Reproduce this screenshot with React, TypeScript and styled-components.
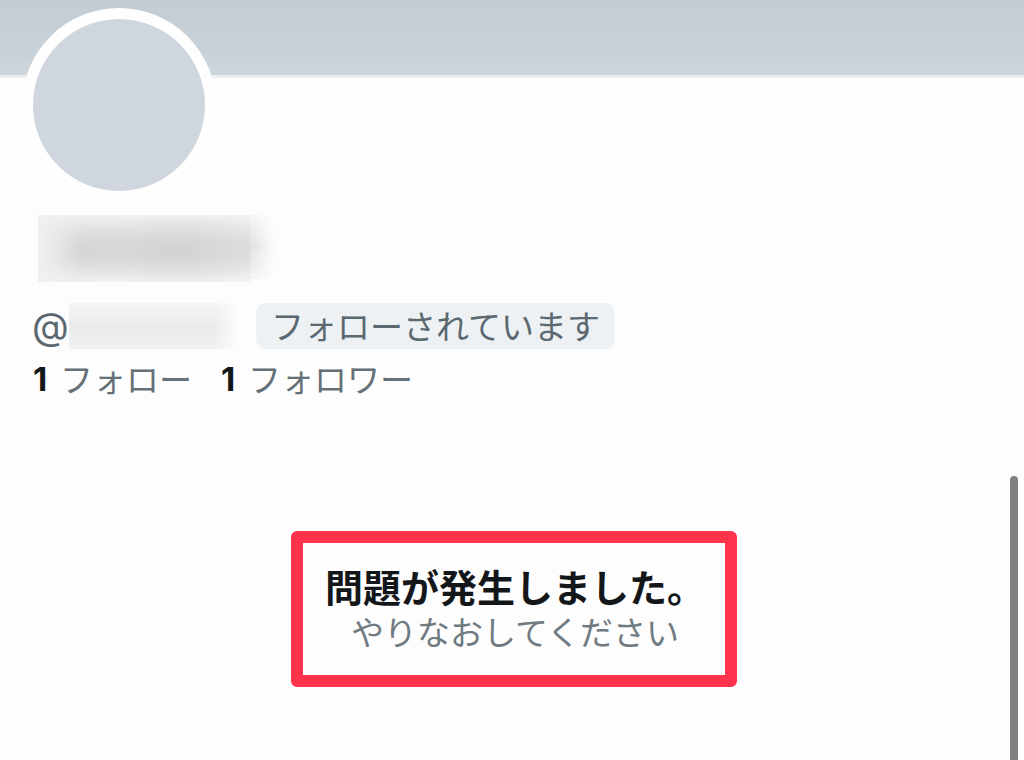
import React from "react";
import styled, { createGlobalStyle } from "styled-components";

const GlobalStyle = createGlobalStyle`
  *, *::before, *::after { box-sizing: border-box; }
  body {
    margin: 0;
    background: #fdfdfd;
    color: #14171a;
    font-family: "Noto Sans CJK JP", "Noto Sans", sans-serif;
    font-size: 33px;
    line-height: 44px;
  }
  p, h1, h2 { margin: 0; }
`;

const Page = styled.div`
  min-height: 100vh;
  overflow: hidden;
`;

const Banner = styled.header`
  height: 78px;
  background: linear-gradient(#c3cbd3, #c8d0d8 60%, #ccd6da) padding-box;
  border-bottom: 3px solid #e8efee;
`;

const Profile = styled.section`
  display: flex;
  flex-direction: column;
  align-items: flex-start;
  padding: 0 32px;
`;

const Avatar = styled.div`
  width: 194px;
  height: 194px;
  margin: -70px 0 0 -10px;
  border: 11px solid #fefefe;
  border-radius: 50%;
  background: #fefefe;

  &::before {
    content: "";
    display: block;
    height: 100%;
    border-radius: 50%;
    background: #cfd6dd;
  }
`;

const HiddenName = styled.h1`
  display: flex;
  width: 240px;
  height: 67px;
  margin: 13px 0 0 6px;

  &::before {
    content: "";
    width: 212px;
    background:
      linear-gradient(90deg, #f0f0f0, rgba(240, 240, 240, 0) 20%),
      radial-gradient(ellipse 110px 36px at 64% 52%, rgba(204, 205, 205, 0.8), rgba(224, 224, 224, 0)),
      radial-gradient(ellipse 70px 34px at 20% 52%, rgba(208, 209, 209, 0.7), rgba(224, 224, 224, 0)),
      linear-gradient(#f0f0f0, #e2e3e3 40%, #e2e3e3 65%, #f2f2f2);
  }

  &::after {
    content: "";
    width: 28px;
    height: 64px;
    background:
      linear-gradient(90deg, rgba(253, 253, 253, 0), #fdfdfd 90%),
      linear-gradient(#f5f5f5, #dfe0e0 50%, #f4f4f4);
  }
`;

const HandleRow = styled.div`
  display: flex;
  align-items: center;
  margin-top: 21px;
`;

const Handle = styled.p`
  display: flex;
  align-items: center;
  width: 224px;
  color: #5b6870;
  font-family: Inter, sans-serif;
  font-size: 38px;
`;

const HiddenHandle = styled.span`
  flex: 1;
  height: 46px;
  margin-right: 16px;
  background:
    linear-gradient(90deg, rgba(253, 253, 253, 0) 85%, #fdfdfd),
    linear-gradient(#f5f5f6, #eaebed 50%, #f0f1f2);
`;

const FollowsYou = styled.span`
  padding: 0 15px 2px;
  border-radius: 10px;
  background: #edf1f4;
  color: #5b6870;
`;

const Stats = styled.nav`
  display: flex;
  gap: 28px;
  margin-top: 7px;
`;

const StatLink = styled.a`
  display: flex;
  color: #657077;
  text-decoration: none;
`;

const Count = styled.strong`
  width: 28px;
  padding: 1px 0 0 1px;
  color: #14171a;
  font-family: Inter, sans-serif;
  font-weight: 700;
`;

const ErrorArea = styled.div`
  display: flex;
  justify-content: center;
  padding: 130px 16px 0 20px;
`;

const ErrorPanel = styled.section`
  display: flex;
  flex-direction: column;
  align-items: center;
  padding: 20px 20px 22px 22px;
  border: 12px solid #ff334b;
  border-radius: 6px;
`;

const ErrorTitle = styled.h2`
  font-size: 38px;
  line-height: 46px;
  font-weight: 700;
`;

const ErrorHint = styled.p`
  color: #6f7a81;
`;

const ScrollThumb = styled.div`
  position: fixed;
  top: 476px;
  right: 6px;
  bottom: -8px;
  width: 8px;
  border-radius: 4px;
  background: #808080;
`;

export default function App() {
  return (
    <Page>
      <GlobalStyle />
      <Banner />
      <main>
        <Profile>
          <Avatar />
          <HiddenName />
          <HandleRow>
            <Handle>
              @<HiddenHandle />
            </Handle>
            <FollowsYou>フォローされています</FollowsYou>
          </HandleRow>
          <Stats>
            <StatLink href="#following">
              <Count>1</Count>フォロー
            </StatLink>
            <StatLink href="#followers">
              <Count>1</Count>フォロワー
            </StatLink>
          </Stats>
        </Profile>
        <ErrorArea>
          <ErrorPanel role="alert">
            <ErrorTitle>問題が発生しました。</ErrorTitle>
            <ErrorHint>やりなおしてください</ErrorHint>
          </ErrorPanel>
        </ErrorArea>
      </main>
      <ScrollThumb />
    </Page>
  );
}
